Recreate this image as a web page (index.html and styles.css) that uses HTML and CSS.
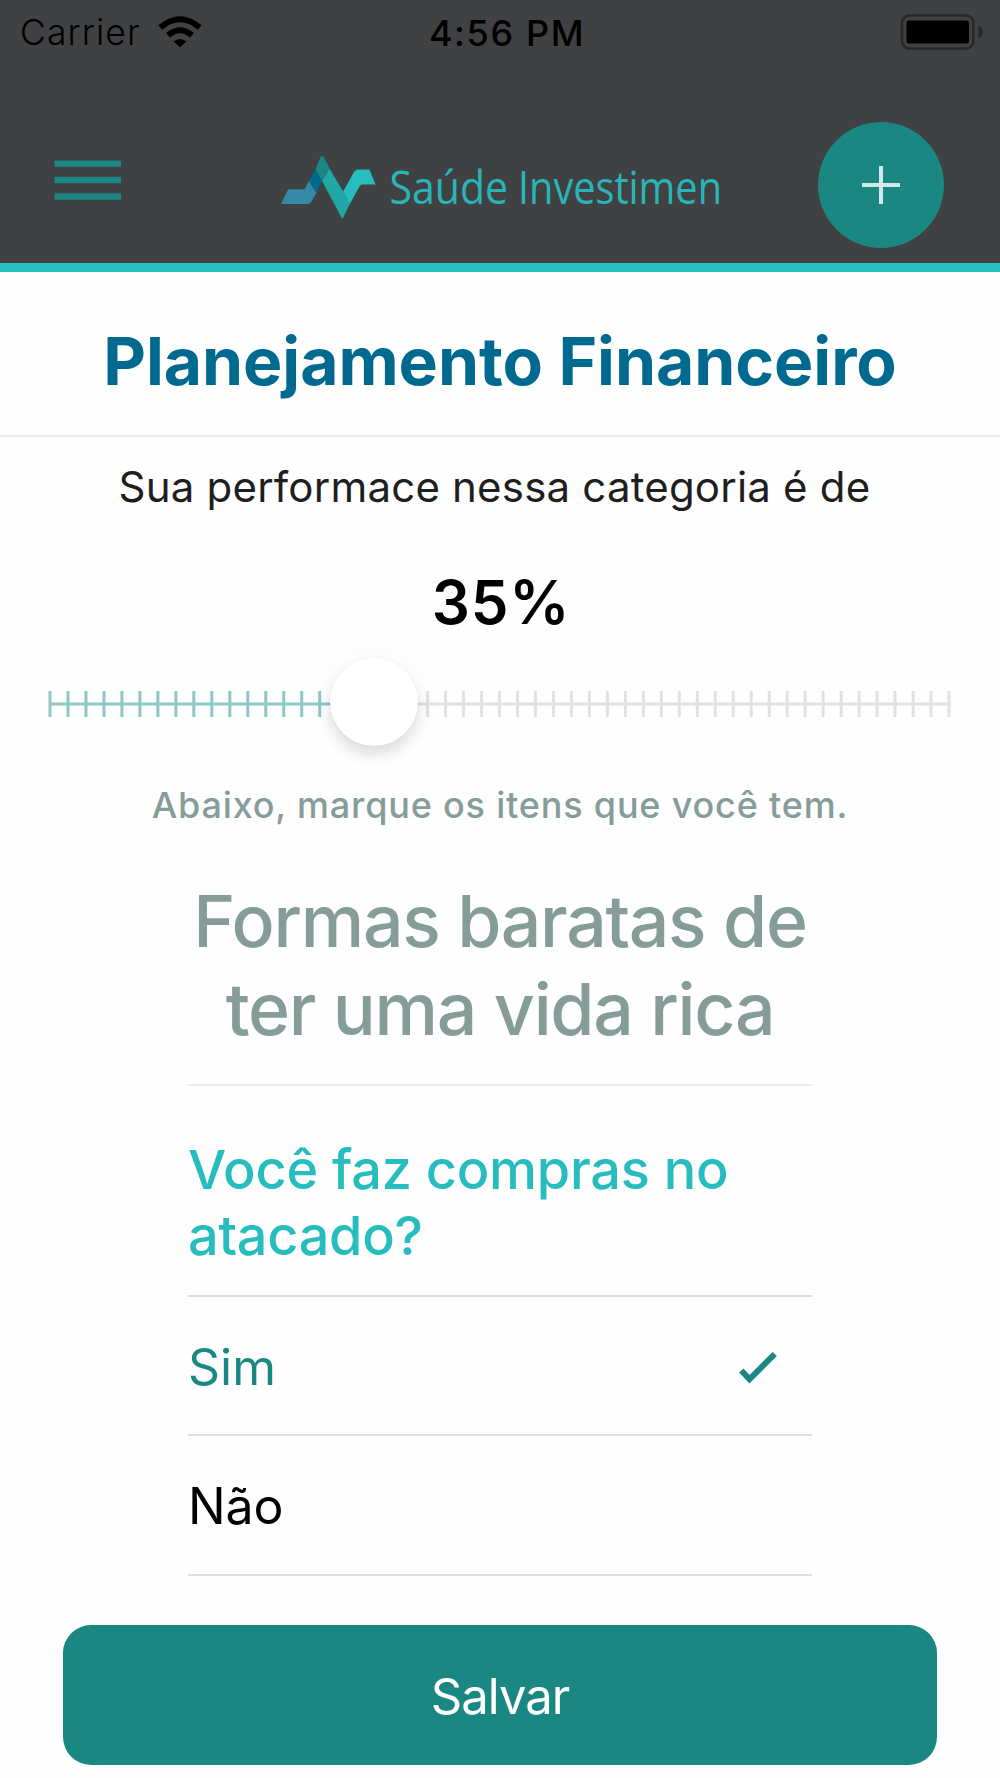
FILE: index.html
```html
<!DOCTYPE html>
<html lang="pt-BR">
<head>
<meta charset="utf-8">
<title>Planejamento Financeiro</title>
<link rel="stylesheet" href="styles.css">
</head>
<body>
<header class="top">
  <div class="status">
    <div class="status-left">
      <span class="carrier">Carrier</span>
      <svg class="wifi" width="44" height="32" viewBox="0 0 44 32">
        <path fill="none" stroke="#000" stroke-width="6" d="M2.300 11.500Q22-5 41.700 11.500"/>
        <path fill="none" stroke="#000" stroke-width="6" d="M10 19.300Q22 9.200 34 19.300"/>
        <path d="M15.800 25.500Q22 20.500 28.200 25.500L22 31.500Z"/>
      </svg>
    </div>
    <span class="clock">4:56 PM</span>
    <svg class="battery" width="84" height="36" viewBox="0 0 84 36">
      <rect x="2" y="1.500" width="71.500" height="33" rx="7.500" fill="none" stroke="#27282a" stroke-width="2.600"/>
      <rect x="6.500" y="6.500" width="62.500" height="23" rx="2.500"/>
      <path fill="#27282a" d="M78.500 11.500Q82.800 14 82.800 18T78.500 24.500Z"/>
    </svg>
  </div>
  <nav class="bar">
    <svg class="burger" width="67" height="126" viewBox="0 0 67 126">
      <path fill="none" stroke="#1a8783" stroke-width="6.300" d="M0.500 41.600h66.500M0.500 58h66.500M0.500 74.500h66.500"/>
    </svg>
    <svg class="brand" width="439" height="126" viewBox="0 0 439 126">
      <path fill="#3589a6" d="M0 82L7.200 67.300H23.500L28 59L35.500 71L30 80Q28.800 82 26.500 82Z"/>
      <path fill="#00698f" d="M28 59L34.500 47L40.800 58.500L35.500 71Z"/>
      <path fill="#1a8783" d="M34.500 47L39.300 35.500Q41.200 32.500 43 35.500L48.500 46.500L41 59Z"/>
      <path fill="#22a7a7" d="M48.500 46.500L62.200 69.500L68.500 82.500L62 96H60.800L41 59Z"/>
      <path fill="#27bdbe" d="M62.200 69.500L73 50Q74.500 47.500 77 47.500H88.500L94.500 62.500H81.500Q79.500 62.500 78.500 64.500L68.500 82.500Z"/>
      <text class="brand-name" x="108.500" y="82" textLength="118.500" lengthAdjust="spacingAndGlyphs">Saúde</text>
      <text class="brand-name" x="237" y="82" textLength="204" lengthAdjust="spacingAndGlyphs">Investimen</text>
    </svg>
    <button class="add" aria-label="Adicionar">
      <svg width="40" height="40" viewBox="0 0 40 40"><path fill="none" stroke="#d3e8e7" stroke-width="4" d="M1 20h38M20 1v38"/></svg>
    </button>
  </nav>
</header>
<h1 class="title">Planejamento Financeiro</h1>
<main class="content">
  <p class="lead">Sua performace nessa categoria é de</p>
  <p class="percent">35%</p>
  <div class="slider">
    <svg class="track" width="904" height="26" viewBox="0 0 904 26">
      <defs>
        <pattern id="ticks-on" x="0.500" width="17.980" height="26" patternUnits="userSpaceOnUse"><rect width="3" height="26" fill="#90c6c5"/></pattern>
        <pattern id="ticks-off" x="0.500" width="17.980" height="26" patternUnits="userSpaceOnUse"><rect width="3" height="26" fill="#e1e1e1"/></pattern>
      </defs>
      <rect width="325" height="26" fill="url(#ticks-on)"/>
      <rect x="325" width="579" height="26" fill="url(#ticks-off)"/>
      <rect x="1" y="11.500" width="324" height="3" fill="#90c6c5"/>
      <rect x="325" y="11.500" width="578" height="3" fill="#e1e1e1"/>
    </svg>
    <div class="knob"></div>
  </div>
  <p class="hint">Abaixo, marque os itens que você tem.</p>
  <section class="group">
    <h2 class="group-title">Formas baratas de<br>ter uma vida rica</h2>
    <h3 class="question">Você faz compras no<br>atacado?</h3>
    <ul class="options">
      <li class="option selected"><span class="yes">Sim</span>
        <svg class="check" width="40" height="34" viewBox="0 0 40 34"><path fill="none" stroke="#1a8783" stroke-width="6" d="M3.300 19.500L11.500 28.300L36.700 3"/></svg>
      </li>
      <li class="option"><span class="no">Não</span></li>
    </ul>
  </section>
  <button class="save">Salvar</button>
</main>
</body>
</html>
```
FILE: styles.css
```css
* { box-sizing: border-box; }

body, h1, h2, h3, p, ul { margin: 0; padding: 0; }

body {
  width: 1000px;
  height: 1778px;
  overflow: hidden;
  background: #fefefe;
  color: #000;
  font-family: Inter, "Liberation Sans", sans-serif;
}

svg { display: block; }

.top {
  height: 272px;
  background: #404142;
  border-bottom: 9px solid #27bdbe;
}

.status {
  display: grid;
  grid-template-columns: 1fr auto 1fr;
  align-items: center;
  height: 64px;
  padding: 0 16px 0 20px;
}

.status-left { display: flex; align-items: center; gap: 17px; }
.carrier { padding-top: 1px; font-size: 35.5px; font-weight: 300; letter-spacing: 1.1px; }
.clock { padding: 1px 0 0 10px; font-size: 36px; font-weight: 500; letter-spacing: 1.6px; }
.battery { justify-self: end; }

.bar {
  display: grid;
  grid-template-columns: 227px 1fr 126px;
  padding: 58px 56px 0 54px;
}

.brand { overflow: visible; }

.brand-name {
  fill: #29b5b7;
  font-family: "Open Sans", "Noto Sans", sans-serif;
  font-size: 46px;
}

.add {
  display: grid;
  place-items: center;
  width: 126px;
  height: 126px;
  padding: 0;
  border: 0;
  border-radius: 50%;
  background: #1a8783;
}

.title {
  height: 165px;
  padding-top: 49px;
  border-bottom: 2px solid #ececec;
  color: #00698f;
  font-size: 66px;
  font-weight: 700;
  letter-spacing: -0.05px;
  line-height: 80px;
  text-align: center;
}

.content { text-align: center; }

.lead {
  margin-top: 25px;
  padding-right: 11px;
  color: #1e1e1e;
  font-size: 42px;
  letter-spacing: 0.2px;
  line-height: 50px;
}

.percent {
  margin-top: 55px;
  padding-left: 2px;
  font-size: 60px;
  font-weight: 600;
  letter-spacing: 0.8px;
  line-height: 70px;
}

.slider {
  position: relative;
  height: 106px;
  margin-top: 13px;
  padding: 41px 48px 0;
}

.knob {
  position: absolute;
  top: 8px;
  left: 329.5px;
  width: 88px;
  height: 88px;
  border-radius: 50%;
  background: #fff;
  box-shadow: 0 9px 14px rgba(0, 0, 0, 0.11), 0 2px 30px rgba(0, 0, 0, 0.04), 0 0 2px rgba(0, 0, 0, 0.05);
}

.hint {
  margin-top: 27px;
  color: #869c99;
  font-size: 36px;
  font-weight: 500;
  letter-spacing: 0.81px;
  line-height: 44px;
}

.group { width: 624px; margin: 51px 188px 0; }

.group-title {
  padding-bottom: 31px;
  border-bottom: 2px solid #ececec;
  color: #869c99;
  font-size: 71.5px;
  font-weight: 500;
  letter-spacing: -1.3px;
  line-height: 87.5px;
}

.group-title,
.question { white-space: nowrap; }

.question {
  padding: 51px 0 26px;
  border-bottom: 2px solid #dfdfdf;
  color: #27bdbe;
  font-size: 54px;
  font-weight: 500;
  letter-spacing: -0.25px;
  line-height: 66px;
  text-align: left;
}

.options { list-style: none; }

.option {
  display: flex;
  align-items: center;
  justify-content: space-between;
  height: 139.3px;
  padding-top: 2px;
  border-bottom: 2px solid #dfdfdf;
  font-size: 50px;
}

.selected { padding-right: 34px; color: #1a8783; }
.check { margin-top: 3px; }
.no { letter-spacing: -0.1px; }

.save {
  display: block;
  width: 874px;
  height: 140px;
  margin: 49px auto 0;
  padding: 4px 0 0;
  border: 0;
  border-radius: 28px;
  background: #1a8783;
  color: #fff;
  font: 400 49px Inter, "Liberation Sans", sans-serif;
  letter-spacing: -1px;
}
```
